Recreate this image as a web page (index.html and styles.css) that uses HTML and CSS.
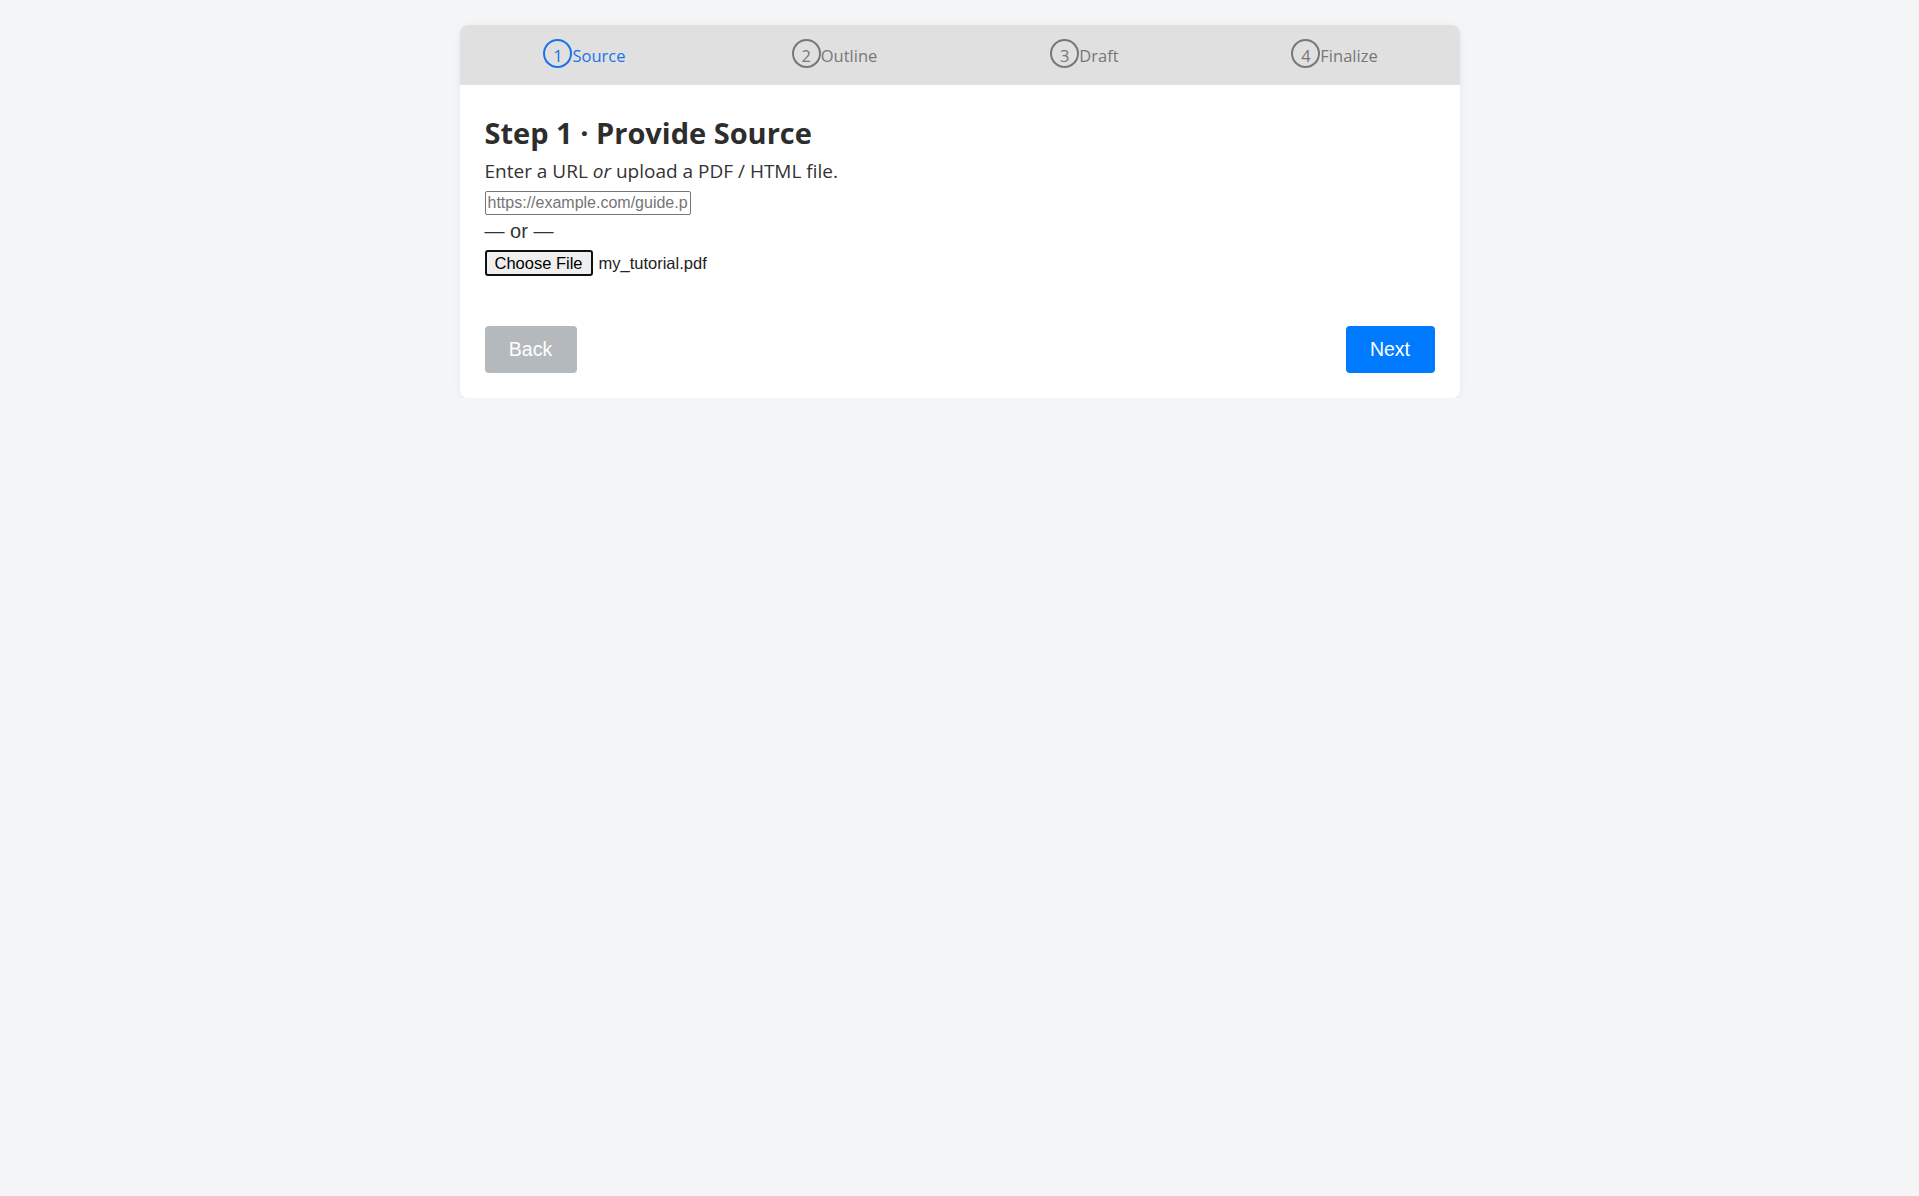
FILE: index.html
```html
<!DOCTYPE html>
<html lang="en">
<head>
<meta charset="utf-8">
<title>Provide Source</title>
<link rel="stylesheet" href="styles.css">
</head>
<body>
<div class="card">
  <div class="steps">
    <div class="step active"><span class="num">1</span><span class="label">Source</span></div>
    <div class="step"><span class="num">2</span><span class="label">Outline</span></div>
    <div class="step"><span class="num">3</span><span class="label">Draft</span></div>
    <div class="step"><span class="num">4</span><span class="label">Finalize</span></div>
  </div>
  <div class="content">
    <h2 class="title">Step 1 · Provide Source</h2>
    <p class="lead">Enter a URL <em>or</em> upload a PDF / HTML file.</p>
    <input class="url" type="text" placeholder="https://example.com/guide.pdf">
    <div class="or">— or —</div>
    <div class="file-row"><span class="file-btn">Choose File</span><span class="file-name">my_tutorial.pdf</span></div>
    <div class="actions">
      <button class="btn btn-back" disabled>Back</button>
      <button class="btn btn-next">Next</button>
    </div>
  </div>
</div>
</body>
</html>
```

FILE: styles.css
```css
* { box-sizing: border-box; }
html, body { margin: 0; }
body {
  background: #f4f5f7;
  font-family: "Open Sans", "Noto Sans", sans-serif;
  color: #333;
  padding-top: 25px;
}
.card {
  width: 1000px;
  margin: 0 auto;
  background: #fff;
  border-radius: 8px;
  box-shadow: 0 2px 8px rgba(0,0,0,0.06);
}
.steps {
  display: flex;
  background: #e0e0e0;
  border-radius: 8px 8px 0 0;
  height: 60px;
  padding-top: 14px;
}
.step {
  flex: 1;
  text-align: center;
  font-size: 16.5px;
  line-height: 22px;
  color: #777;
}
.num {
  display: inline-block;
  width: 29px;
  height: 29px;
  border: 2px solid #777;
  border-radius: 50%;
  padding-top: 3px;
  line-height: 24px;
  text-align: center;
  vertical-align: baseline;
}
.step.active { color: #1a73e8; }
.step.active .num { border-color: #1a73e8; }
.content {
  padding: 25px;
}
.title {
  margin: 4px 0 0;
  font-size: 29px;
  line-height: 38px;
  font-weight: 700;
  color: #2d2d2d;
}
.lead {
  margin: 7px 0 0;
  font-size: 19px;
  line-height: 24px;
}
.url {
  display: block;
  margin-top: 8px;
  width: 206px;
  height: 24px;
  border: 1px solid #767676;
  border-radius: 2px;
  padding: 1px 2px;
  font-family: "Liberation Sans", Arial, sans-serif;
  font-size: 16px;
  color: #222;
}
.url::placeholder { color: #757575; }
.or {
  margin-top: 5px;
  font-family: "Liberation Sans", Arial, sans-serif;
  font-size: 20px;
  line-height: 22px;
  color: #333;
}
.file-row {
  margin-top: 8px;
  display: flex;
  align-items: center;
  font-family: "Liberation Sans", Arial, sans-serif;
  font-size: 16.5px;
  height: 26px;
}
.file-btn {
  display: inline-flex;
  align-items: center;
  justify-content: center;
  height: 26px;
  width: 108px;
  border: 2px solid #111;
  border-radius: 3px;
  background: #efefef;
  color: #000;
}
.file-name {
  margin-left: 6px;
  color: #222;
}
.actions {
  margin-top: 50px;
  display: flex;
  justify-content: space-between;
}
.btn {
  font-family: "Liberation Sans", Arial, sans-serif;
  font-size: 19.5px;
  line-height: 21px;
  height: 47px;
  padding: 0;
  border: none;
  border-radius: 4px;
  color: #fff;
}
.btn-back { background: #6c757d; opacity: 0.5; width: 92px; }
.btn-next { background: #007bff; width: 89px; }
```
